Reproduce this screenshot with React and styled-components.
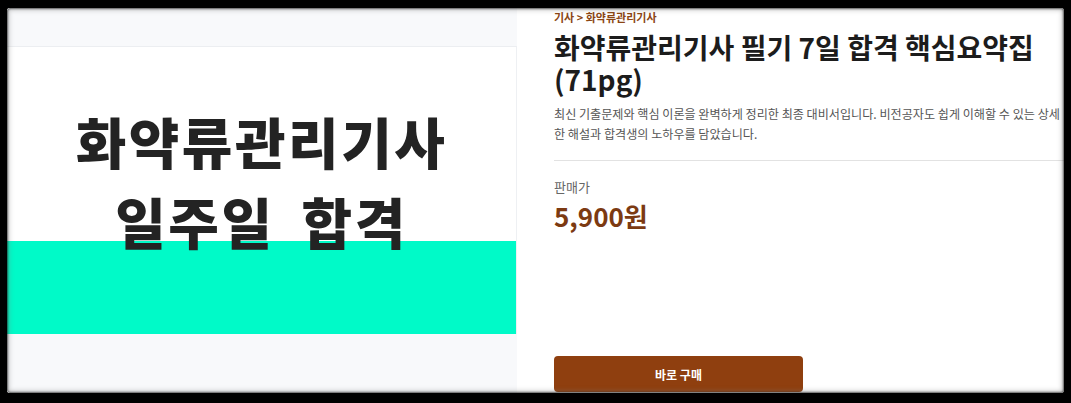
import React from "react";
import styled, { createGlobalStyle } from "styled-components";

const GlobalStyle = createGlobalStyle`
  html, body {
    margin: 0;
    padding: 0;
    background: #000;
  }
  body {
    font-family: "Noto Sans CJK KR", "Noto Sans", sans-serif;
  }
`;

const Frame = styled.div`
  position: relative;
  margin: 8px 7px 10px 7px;
  height: 385px;
  background: #fff;
  overflow: hidden;
  border-radius: 3px;
`;

const Edge = styled.div`
  position: absolute;
  inset: 0;
  pointer-events: none;
  border-radius: 3px;
  box-shadow: inset 0 0 2px 1px rgba(0, 0, 0, 0.55),
    inset 0 0 5px 2px rgba(120, 120, 120, 0.4);
`;

const Layout = styled.div`
  display: flex;
  height: 100%;
`;

const Gallery = styled.div`
  flex: 0 0 510px;
  background: #f8f9fb;
  padding-top: 38px;
  box-sizing: border-box;
`;

const Cover = styled.div`
  height: 288px;
  border-top: 1px solid #eceef1;
  border-right: 1px solid #eef0f3;
  box-sizing: border-box;
  background: linear-gradient(to bottom, #fff 0, #fff 194px, #00fac8 194px);
  display: flex;
  flex-direction: column;
  align-items: center;
  padding-top: 53px;
`;

const CoverLine = styled.div`
  font-family: "Noto Sans CJK KR", sans-serif;
  font-weight: 900;
  font-size: 55px;
  line-height: 80px;
  color: #232323;
  letter-spacing: 2.5px;
  word-spacing: ${(p) => p.$gap || 0}px;
`;

const Info = styled.div`
  flex: 0 0 520px;
  padding-left: 37px;
  display: flex;
  flex-direction: column;
`;

const Crumb = styled.div`
  font-size: 11px;
  font-weight: 700;
  color: #8b4513;
  line-height: 16px;
  margin-top: 1px;
`;

const Title = styled.h1`
  margin: 6px 0 0;
  font-size: 28px;
  font-weight: 700;
  line-height: 32px;
  color: #1c1c1c;
`;

const Desc = styled.p`
  margin: 9px 0 0;
  max-width: 514px;
  font-size: 12.1px;
  line-height: 20px;
  color: #555;
`;

const Divider = styled.hr`
  border: 0;
  border-top: 1px solid #e2e2e2;
  margin: 16px 0 0;
  width: 560px;
`;

const PriceLabel = styled.div`
  margin-top: 17px;
  font-size: 13px;
  color: #666;
  line-height: 18px;
`;

const Price = styled.div`
  margin-top: 4px;
  font-size: 26px;
  font-weight: 700;
  color: #7c3a12;
  line-height: 32px;
`;

const BuyButton = styled.button`
  margin-top: auto;
  margin-bottom: 1px;
  width: 249px;
  height: 36px;
  border: 0;
  border-radius: 4px;
  background: #8f3f0f;
  color: #fff;
  font-family: "Noto Sans CJK KR", sans-serif;
  font-size: 12px;
  font-weight: 700;
`;

export default function App() {
  return (
    <>
      <GlobalStyle />
      <Frame>
        <Layout>
          <Gallery>
            <Cover>
              <CoverLine>화약류관리기사</CoverLine>
              <CoverLine $gap={12}>일주일 합격</CoverLine>
            </Cover>
          </Gallery>
          <Info>
            <Crumb>기사 &gt; 화약류관리기사</Crumb>
            <Title>
              화약류관리기사 필기 7일 합격 핵심요약집
              <br />
              (71pg)
            </Title>
            <Desc>
              최신 기출문제와 핵심 이론을 완벽하게 정리한 최종 대비서입니다.
              비전공자도 쉽게 이해할 수 있는 상세한 해설과 합격생의 노하우를
              담았습니다.
            </Desc>
            <Divider />
            <PriceLabel>판매가</PriceLabel>
            <Price>5,900원</Price>
            <BuyButton>바로 구매</BuyButton>
          </Info>
        </Layout>
        <Edge />
      </Frame>
    </>
  );
}
